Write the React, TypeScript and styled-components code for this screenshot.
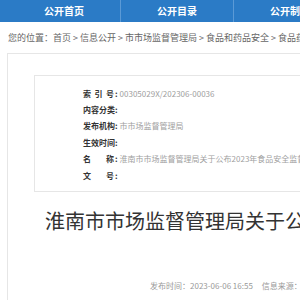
import React from "react";
import styled, { createGlobalStyle } from "styled-components";

// 信息公开 详情页 (顶部导航 + 元数据表 + 标题)

const GlobalStyle = createGlobalStyle`
  html, body {
    margin: 0;
    padding: 0;
    background: #ffffff;
    overflow: hidden;
  }
  body {
    font-family: "Noto Sans CJK SC", "Noto Sans", "Liberation Sans", sans-serif;
  }
`;

const navItems = ["公开首页", "公开目录", "公开制度", "公开指南"];

const metaRows = [
  { label: "索引号", value: "00305029X/202306-00036" },
  { label: "内容分类", value: "" },
  { label: "发布机构", value: "市市场监督管理局" },
  { label: "生效时间", value: "" },
  {
    label: "名称",
    value: "淮南市市场监督管理局关于公布2023年食品安全监督抽检信息的通告",
  },
  { label: "文号", value: "" },
];

export default function App() {
  return (
    <>
      <GlobalStyle />
      <Page>
        <NavBar>
          {navItems.map((item) => (
            <NavItem key={item}>{item}</NavItem>
          ))}
        </NavBar>
        <Breadcrumb>
          您的位置：首页 &gt; 信息公开 &gt; 市市场监督管理局 &gt; 食品和药品安全 &gt; 食品药品监督
        </Breadcrumb>
        <Content>
          <MetaBox>
            {metaRows.map((row) => (
              <MetaRow key={row.label}>
                <MetaLabel>{row.label}</MetaLabel>
                <Colon>:</Colon>
                <MetaValue>{row.value}</MetaValue>
              </MetaRow>
            ))}
          </MetaBox>
          <Title>淮南市市场监督管理局关于公布2023年食品安全监督抽检信息的通告</Title>
          <InfoLine>
            <span>发布时间：2023-06-06 16:55</span>
            <span>信息来源：市市场监督管理局</span>
          </InfoLine>
        </Content>
      </Page>
    </>
  );
}

const Page = styled.div`
  width: 1000px;
  height: 300px;
  overflow: hidden;
`;

const NavBar = styled.div`
  height: 22px;
  background-color: #2b7bc6;
  display: flex;
  padding-left: 8px;
`;

const NavItem = styled.div`
  width: 113px;
  flex-shrink: 0;
  border-right: 1px solid #5b9ad6;
  box-sizing: border-box;
  color: #ffffff;
  font-size: 10px;
  font-weight: 700;
  line-height: 22px;
  text-align: center;
`;

const Breadcrumb = styled.div`
  padding: 9px 8px 8px;
  font-size: 9px;
  line-height: 14px;
  color: #666666;
  white-space: nowrap;
`;

const Content = styled.div`
  margin-left: 7px;
  border-top: 1px solid #e6e6e6;
  border-left: 1px solid #e6e6e6;
  padding: 21px 0 0 26px;
  height: 260px;
`;

const MetaBox = styled.div`
  border: 1px solid #e6e6e6;
  border-right: none;
  padding: 9px 0 8px 48px;
`;

const MetaRow = styled.div`
  display: flex;
  align-items: center;
  height: 16.4px;
  font-size: 8px;
  white-space: nowrap;
`;

const MetaLabel = styled.span`
  width: 31px;
  font-weight: 700;
  color: #333333;
  text-align: justify;
  text-align-last: justify;
`;

const Colon = styled.span`
  font-weight: 700;
  color: #333333;
  margin: 0 2px 0 1px;
`;

const MetaValue = styled.span`
  color: #a0a0a0;
`;

const Title = styled.h1`
  margin: 14px 0 0 11px;
  font-size: 20px;
  font-weight: 400;
  line-height: 30px;
  color: #333333;
  white-space: nowrap;
`;

const InfoLine = styled.div`
  margin: 44px 0 0 116px;
  display: flex;
  gap: 9px;
  font-size: 8px;
  line-height: 12px;
  color: #999999;
  white-space: nowrap;
`;
